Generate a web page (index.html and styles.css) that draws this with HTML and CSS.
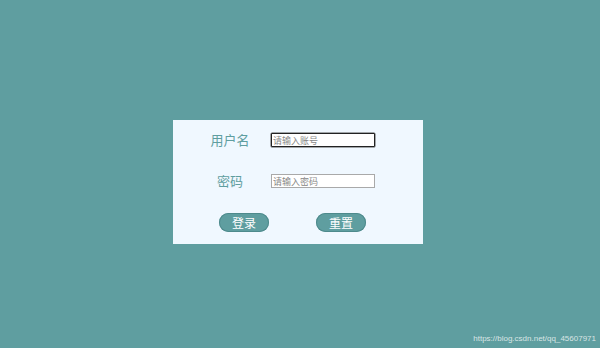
FILE: index.html
```html
<!DOCTYPE html>
<html lang="zh-CN">
<head>
<meta charset="utf-8">
<title>登录</title>
<link rel="stylesheet" href="styles.css">
</head>
<body>
<div class="page">
  <form class="login">
    <div class="row">
      <label class="label">用户名</label>
      <input class="field field-focus" type="text" placeholder="请输入账号">
    </div>
    <div class="row row-pwd">
      <label class="label">密码</label>
      <input class="field" type="password" placeholder="请输入密码">
    </div>
    <div class="actions">
      <button type="button" class="btn">登录</button>
      <button type="button" class="btn">重置</button>
    </div>
  </form>
  <div class="watermark">https://blog.csdn.net/qq_45607971</div>
</div>
</body>
</html>
```
FILE: styles.css
```css
html, body {
  margin: 0;
  padding: 0;
}
body {
  background: #5f9ea0;
  font-family: "Noto Sans CJK SC", "Noto Sans", sans-serif;
}
.page {
  position: relative;
  width: 600px;
  height: 348px;
  padding-top: 120px;
  box-sizing: border-box;
}
.login {
  margin: 0 0 0 173px;
  width: 250px;
  height: 124px;
  box-sizing: border-box;
  padding-top: 13px;
  background: #f0f8ff;
}
.row {
  display: grid;
  grid-template-columns: 82px 104px;
  padding-left: 16px;
  align-items: center;
  height: 14px;
}
.row-pwd {
  margin-top: 27px;
}
.label {
  text-align: center;
  font-size: 13px;
  line-height: 14px;
  color: #5f9ea0;
}
.field {
  box-sizing: border-box;
  width: 104px;
  height: 14px;
  margin: 0;
  padding: 0 1px;
  border: 1px solid #a9a9a9;
  background: #fff;
  font-family: "Noto Sans CJK SC", sans-serif;
  font-size: 9px;
  outline: none;
}
.field::placeholder {
  color: #888;
}
.field-focus {
  border: 1px solid #222;
  box-shadow: 0 0 0 0.5px #555;
  border-radius: 1px;
}
.actions {
  display: flex;
  gap: 47px;
  margin-top: 25px;
  padding-left: 46px;
}
.btn {
  width: 50px;
  height: 19px;
  margin: 0;
  padding: 0;
  border: none;
  border-radius: 10px;
  background: #5f9ea0;
  color: #fff;
  font-family: "Noto Sans CJK SC", sans-serif;
  font-size: 12px;
  line-height: 19px;
  box-shadow: inset 0 0 0 1px #4e8a8c;
}
.watermark {
  position: absolute;
  right: 4px;
  bottom: 5px;
  font-family: "Liberation Sans", sans-serif;
  font-size: 8px;
  color: rgba(255, 255, 255, 0.75);
}
```
